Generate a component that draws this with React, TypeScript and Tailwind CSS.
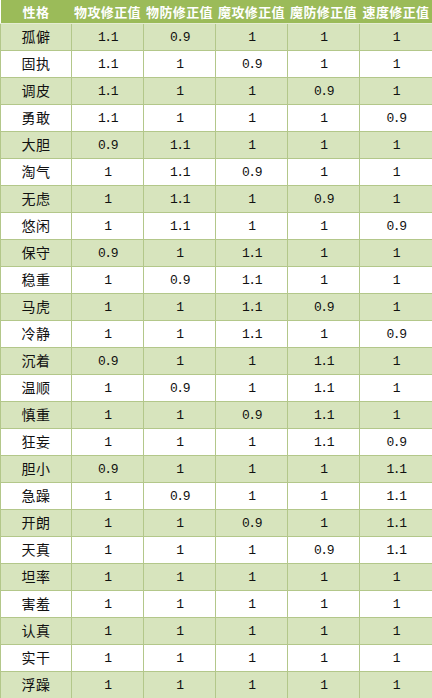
import React from 'react';

const rows: [string, string, string, string, string, string][] = [
  ['孤僻', '1.1', '0.9', '1', '1', '1'],
  ['固执', '1.1', '1', '0.9', '1', '1'],
  ['调皮', '1.1', '1', '1', '0.9', '1'],
  ['勇敢', '1.1', '1', '1', '1', '0.9'],
  ['大胆', '0.9', '1.1', '1', '1', '1'],
  ['淘气', '1', '1.1', '0.9', '1', '1'],
  ['无虑', '1', '1.1', '1', '0.9', '1'],
  ['悠闲', '1', '1.1', '1', '1', '0.9'],
  ['保守', '0.9', '1', '1.1', '1', '1'],
  ['稳重', '1', '0.9', '1.1', '1', '1'],
  ['马虎', '1', '1', '1.1', '0.9', '1'],
  ['冷静', '1', '1', '1.1', '1', '0.9'],
  ['沉着', '0.9', '1', '1', '1.1', '1'],
  ['温顺', '1', '0.9', '1', '1.1', '1'],
  ['慎重', '1', '1', '0.9', '1.1', '1'],
  ['狂妄', '1', '1', '1', '1.1', '0.9'],
  ['胆小', '0.9', '1', '1', '1', '1.1'],
  ['急躁', '1', '0.9', '1', '1', '1.1'],
  ['开朗', '1', '1', '0.9', '1', '1.1'],
  ['天真', '1', '1', '1', '0.9', '1.1'],
  ['坦率', '1', '1', '1', '1', '1'],
  ['害羞', '1', '1', '1', '1', '1'],
  ['认真', '1', '1', '1', '1', '1'],
  ['实干', '1', '1', '1', '1', '1'],
  ['浮躁', '1', '1', '1', '1', '1'],
];

const headers = ['性格', '物攻修正值', '物防修正值', '魔攻修正值', '魔防修正值', '速度修正值'];

const cjk = "[font-family:'Noto_Sans_CJK_SC',sans-serif]";

export default function App() {
  return (
    <div className="w-[432px] h-[698px] overflow-hidden bg-white">
      <table className="w-[432px] table-fixed border-collapse">
        <colgroup>
          <col className="w-[71px]" />
          <col className="w-[72px]" />
          <col className="w-[72px]" />
          <col className="w-[72px]" />
          <col className="w-[72px]" />
          <col className="w-[73px]" />
        </colgroup>
        <thead>
          <tr className="h-[23px] bg-[#9bbb59]">
            {headers.map((h) => (
              <th
                key={h}
                className={`p-0 text-center text-white font-bold text-[13px] tracking-[0.4px] whitespace-nowrap border-b border-[#e4ecd2] ${cjk}`}
              >
                {h}
              </th>
            ))}
          </tr>
        </thead>
        <tbody>
          {rows.map((r, i) => (
            <tr key={r[0]} className={`h-[27px] ${i % 2 === 0 ? 'bg-[#d7e4bd]' : 'bg-white'}`}>
              {r.map((c, j) => (
                <td
                  key={j}
                  className={`p-0 text-center text-[#111] border border-[#b3c78a] ${
                    j === 0
                      ? `text-[14px] tracking-[0.5px] ${cjk}`
                      : "text-[13px] tracking-[-1.5px] pt-[2px] [font-family:'Liberation_Mono',monospace]"
                  }`}
                >
                  {c}
                </td>
              ))}
            </tr>
          ))}
        </tbody>
      </table>
    </div>
  );
}
